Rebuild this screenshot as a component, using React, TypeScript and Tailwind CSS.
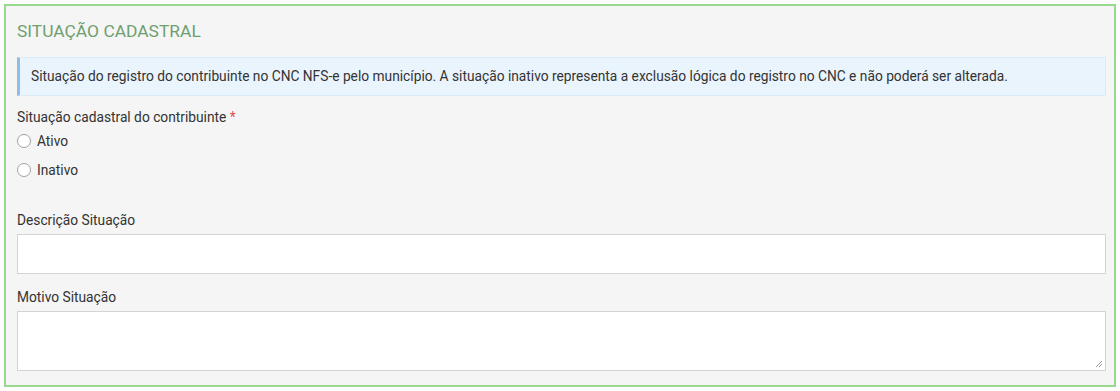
export default function App() {
  return (
    <div className="w-[1120px] h-[391px] bg-white p-[4px]" style={{ fontFamily: "Roboto, 'Liberation Sans', sans-serif" }}>
      <div className="h-[383px] border-2 border-[#98d98e] bg-[#f5f5f5] pl-[11px] pr-[8px] pt-[13px]">
        <h2 className="text-[17.4px] leading-[24px] text-[#6f9f6f] font-normal">SITUAÇÃO CADASTRAL</h2>
        <div className="mt-[14px] h-[39px] border border-[#d9ebf8] border-l-[3px] border-l-[#8fbde3] bg-[#eaf4fd] pl-[11px] flex items-center text-[13.75px] text-[#333]">
          Situação do registro do contribuinte no CNC NFS-e pelo município. A situação inativo representa a exclusão lógica do registro no CNC e não poderá ser alterada.
        </div>
        <div className="mt-[12px] text-[13.75px] leading-[18px] text-[#333]">
          Situação cadastral do contribuinte <span className="text-[#d9534f]">*</span>
        </div>
        <div className="mt-[6px] flex flex-col gap-[11px] text-[13.75px] text-[#333]">
          <label className="flex items-center gap-[6px] h-[18px]">
            <span className="w-[14px] h-[14px] rounded-full border border-[#a0a0a0] bg-white inline-block" />
            Ativo
          </label>
          <label className="flex items-center gap-[6px] h-[18px]">
            <span className="w-[14px] h-[14px] rounded-full border border-[#a0a0a0] bg-white inline-block" />
            Inativo
          </label>
        </div>
        <div className="mt-[32px] text-[13.75px] leading-[18px] text-[#333]">Descrição Situação</div>
        <div className="mt-[5px] h-[40px] border border-[#d4d4d4] bg-white" />
        <div className="mt-[14px] text-[13.75px] leading-[18px] text-[#333]">Motivo Situação</div>
        <div className="mt-[5px] h-[60px] border border-[#d4d4d4] bg-white relative">
          <svg className="absolute right-[2px] bottom-[2px]" width="8" height="8" viewBox="0 0 8 8">
            <path d="M7 1 L1 7 M7 4 L4 7" stroke="#999" strokeWidth="1" />
          </svg>
        </div>
      </div>
    </div>
  );
}
